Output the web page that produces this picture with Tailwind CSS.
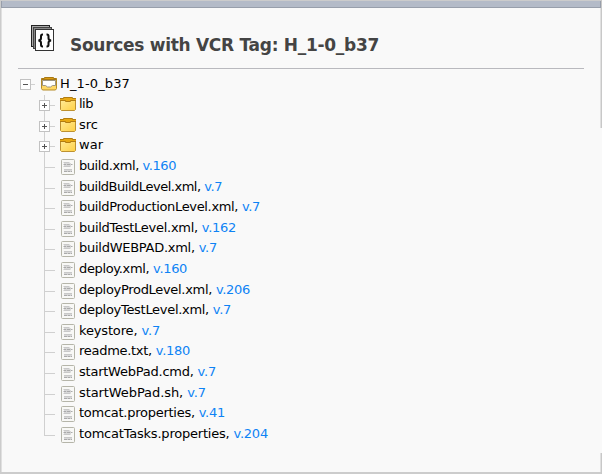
<!DOCTYPE html>
<html lang="en"><head><meta charset="utf-8"><title>Sources with VCR Tag</title>
<script src="https://cdn.jsdelivr.net/npm/@tailwindcss/browser@4"></script></head>
<body class="relative w-[602px] h-[474px] overflow-hidden bg-[#f9f9f9] font-['DejaVu_Sans',sans-serif] text-black">
<svg class="absolute right-0 top-0" width="2" height="474" shape-rendering="crispEdges"><path fill="#e0e0e0" d="M0 8h1v120h-1zM0 453h1v19h-1z"/><path fill="#c8c8c8" d="M1 0h1v128h-1zM1 453h1v21h-1z"/></svg>
<div class="flex h-[474px] flex-col border-l border-t border-b-2 border-[#cccccc]">
  <div class="h-[7px] w-[600px] shrink-0 border-x border-b border-[#989fab] bg-[#b4bbc8]"></div>
  <div class="flex h-full flex-col border-l border-[#e0e0e0] pl-4">
    <header class="flex h-[61px] w-[566px] shrink-0 border-b border-[#b9b9be] pl-[13px] pt-[17px]">
      <svg class="shrink-0" width="23" height="26" shape-rendering="crispEdges"><path fill="#222" d="M0 0h19v22H0z"/><path fill="#aaa" d="M1 1h17v20H1z"/><path fill="#444" d="M2 2h19v22H2z"/><path fill="#888" d="M3 3h17v20H3z"/><path fill="#333" d="M4 4h19v22H4z"/><path fill="#fff" d="M5 5h17v20H5z"/><g shape-rendering="auto" fill="none" stroke="#111" stroke-width="2"><path d="M12 9.500h-.5q-1.500 0-1.500 1.700v2q0 1.800-2.500 2.300 2.500 .5 2.500 2.300v2q0 1.700 1.500 1.700h.5M15.500 9.500h.5q1.500 0 1.500 1.700v2q0 1.800 2.500 2.300-2.500 .5-2.500 2.300v2q0 1.700-1.500 1.700h-.5"/></g></svg>
      <h1 class="ml-4 mt-[9px] whitespace-nowrap text-[17px] leading-[22px] font-bold text-[#444]"><span data-w="309">Sources with VCR Tag: H_1-0_b37</span></h1>
    </header>
    <main id="tree" class="flex flex-col pt-[5px] text-[13px] leading-5"></main>
  </div>
</div>
<template id="root"><svg class="shrink-0" width="40" height="20" shape-rendering="crispEdges"><path stroke="#d0d0d0" d="M13 10.500h4"/><path fill="#fff" stroke="#c2c2c2" d="M2.500 5.500h10v10h-10z"/><path stroke="#555" d="M5 10.500h5"/><g shape-rendering="auto"><path fill="#ffd866" stroke="#b58b28" d="M23.500 5.500h15v9l-1 1.500h-13l-1-1.500z"/><path fill="#fff" stroke="#9c9584" d="M24.500 6.500h13v5h-3l-2 1.500h-3l-2-1.500h-3z"/><path fill="#d99b13" stroke="#a87813" d="M23.500 5.500v-1h3v-1h9v1h3v1z"/></g></svg></template>
<svg width="0" height="0" class="absolute"><defs>
<linearGradient id="gold" x2="1" y2="1"><stop stop-color="#ffeb9a"/><stop offset="1" stop-color="#ffd044"/></linearGradient>
<g id="dir"><path fill="url(#gold)" stroke="#bd9131" d="M.5 3.500h15V13.500l-1 1h-13l-1-1z"/><path fill="#e8a914" d="M0 2h4V1h8v1h4v2h-5v1H5V4H0z"/><path fill="none" stroke="#b27d12" d="M0 2.500h3.500v-1h9v1H16M0 4.500h5.500v1h5v-1H16"/></g>
<g id="file"><rect x=".5" y=".5" width="13" height="15" rx="1" fill="#f8f8f6" stroke="#b5b5a9"/><path fill="none" stroke="#c8c8c8" d="M2.500 3.500h6M2.500 7.500h7M3 10.500h8"/><path stroke="#aaa" stroke-dasharray="3 .5" d="M2.500 5.500h9M3 12.500h8"/><path stroke="#d8d8d8" d="M3 4.500h7M3 6.500h7M3 11.500h8"/></g>
</defs></svg>
<script>
const rows=[["root","H_1-0_b37","",70],["dir","lib","",14],["dir","src","",19],["dir","war","",24],
["file","build.xml","v.160",97],["file","buildBuildLevel.xml","v.7",143],["file","buildProductionLevel.xml","v.7",181],["file","buildTestLevel.xml","v.162",157],["file","buildWEBPAD.xml","v.7",138],["file","deploy.xml","v.160",108],["file","deployProdLevel.xml","v.206",171],["file","deployTestLevel.xml","v.7",152],["file","keystore","v.7",81],["file","readme.txt","v.180",111],["file","startWebPad.cmd","v.7",137],["file","startWebPad.sh","v.7",127],["file","tomcat.properties","v.41",146],["file","tomcatTasks.properties","v.204",189]];
const center=i=>Math.round(84.4+20.62*i);
document.getElementById('tree').innerHTML=rows.map((r,i)=>{
 const h=center(i+1)-center(i);
 let art;
 if(r[0]==='root') art=document.getElementById('root').innerHTML;
 else {
  const end=i===rows.length-1?11:21;
  const toggle=r[0]==='dir'?'<path fill="#fff" stroke="#c2c2c2" d="M5.500 5.500h10v10h-10z"/><path stroke="#555" d="M8 10.500h5M10.500 8v5"/>':'';
  art='<svg class="shrink-0" width="43" height="'+h+'" shape-rendering="crispEdges"><path stroke="#d0d0d0" d="M10.500 0V'+end+'M10 10.500h11"/>'+toggle+'<g shape-rendering="auto" transform="translate('+(r[0]==='dir'?'26 1':'27 2')+')"><use href="#'+r[0]+'"/></g></svg>';
 }
 return '<div class="flex '+(r[0]==='root'?'':'pl-4')+'" style="height:'+h+'px">'+art+'<span class="whitespace-nowrap ml-[2px] '+(r[0]==='root'?'mt-0':'-mt-px')+'" data-w="'+r[3]+'">'+r[1]+(r[2]?', <a class="text-[#0e83f5]">'+r[2]+'</a>':'')+'</span></div>';
}).join('');
function fitText(){
 document.querySelectorAll('[data-w]').forEach(e=>{
  e.style.letterSpacing='0px';
  const range=document.createRange();
  range.selectNodeContents(e);
  e.style.letterSpacing=(+e.dataset.w-range.getBoundingClientRect().width)/e.textContent.length+'px';
 });
}
window.addEventListener('load',()=>{fitText();requestAnimationFrame(fitText);});
</script>
</body></html>
